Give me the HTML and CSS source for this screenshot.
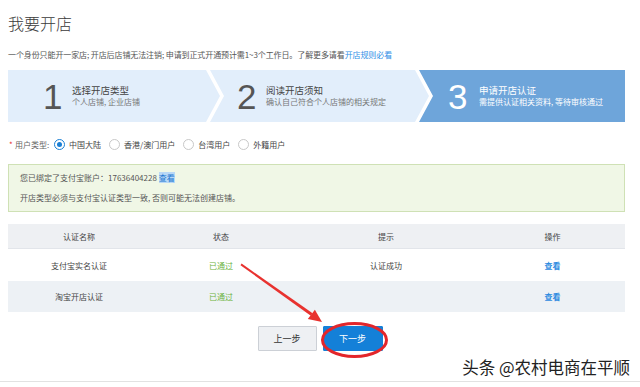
FILE: index.html
```html
<!DOCTYPE html>
<html lang="zh">
<head>
<meta charset="utf-8">
<title>我要开店</title>
<link rel="stylesheet" href="styles.css">
</head>
<body>
<div class="page">
  <h1 class="title">我要开店</h1>
  <p class="intro">一个身份只能开一家店; 开店后店铺无法注销; 申请到正式开通预计需1~3个工作日。了解更多请看<a class="link">开店规则必看</a></p>

  <div class="steps">
    <div class="step step-1">
      <span class="step-num">1</span>
      <div class="step-text">
        <div class="step-title">选择开店类型</div>
        <div class="step-sub">个人店铺, 企业店铺</div>
      </div>
    </div>
    <div class="step step-2">
      <span class="step-num">2</span>
      <div class="step-text">
        <div class="step-title">阅读开店须知</div>
        <div class="step-sub">确认自己符合个人店铺的相关规定</div>
      </div>
    </div>
    <div class="step step-3 active">
      <span class="step-num">3</span>
      <div class="step-text">
        <div class="step-title">申请开店认证</div>
        <div class="step-sub">需提供认证相关资料, 等待审核通过</div>
      </div>
    </div>
  </div>

  <div class="user-type">
    <span class="req">*</span><span class="ut-label">用户类型:</span>
    <span class="radio checked"></span><span class="radio-label">中国大陆</span>
    <span class="radio"></span><span class="radio-label">香港/澳门用户</span>
    <span class="radio"></span><span class="radio-label">台湾用户</span>
    <span class="radio"></span><span class="radio-label">外籍用户</span>
  </div>

  <div class="notice">
    <p>您已绑定了支付宝账户：17636404228 <a class="hl">查看</a></p>
    <p>开店类型必须与支付宝认证类型一致, 否则可能无法创建店铺。</p>
  </div>

  <table class="auth">
    <colgroup><col class="c1"><col class="c2"><col class="c3"><col class="c4"></colgroup>
    <thead>
      <tr><th>认证名称</th><th>状态</th><th>提示</th><th>操作</th></tr>
    </thead>
    <tbody>
      <tr class="r1"><td>支付宝实名认证</td><td class="ok">已通过</td><td>认证成功</td><td><a class="view">查看</a></td></tr>
      <tr class="r2"><td>淘宝开店认证</td><td class="ok">已通过</td><td></td><td><a class="view">查看</a></td></tr>
    </tbody>
  </table>

  <div class="actions">
    <button class="btn btn-prev">上一步</button>
    <button class="btn btn-next">下一步</button>
  </div>
</div>
<div class="bottom-line"></div>

<svg class="annot" width="640" height="387" viewBox="0 0 640 387">
  <polygon points="240.5,265.2 241.6,263.6 312.6,313.2 310.8,315.8" fill="#e8322f"/>
  <polygon points="322,322 307.8,318.9 314.9,309.8" fill="#e8322f"/>
  <ellipse cx="354.5" cy="340" rx="32" ry="16.5" fill="none" stroke="#e3262b" stroke-width="3"/>
</svg>

<div class="watermark">头条 @农村电商在平顺</div>
</body>
</html>
```

FILE: styles.css
```css
html, body {
  margin: 0;
  padding: 0;
  background: #fff;
}
body {
  position: relative;
  width: 640px;
  height: 387px;
  overflow: hidden;
  font-family: "Noto Sans CJK SC", "Liberation Sans", sans-serif;
  color: #333;
}
.page {
  padding: 0 15px 0 8px;
}
.title {
  margin: 13px 0 0;
  font-size: 16px;
  line-height: 20px;
  font-weight: 300;
  color: #3a3a3a;
}
.intro {
  margin: 17px 0 0;
  font-size: 8px;
  line-height: 10px;
  color: #555;
  white-space: nowrap;
  letter-spacing: -0.1px;
}
.link {
  color: #2f8fe6;
}
.steps {
  margin-top: 10px;
  display: flex;
  height: 52px;
}
.step {
  display: flex;
  align-items: center;
  height: 52px;
  background: #e2eefb;
  box-sizing: border-box;
}
.step-1 {
  width: 212px;
  padding-left: 35px;
  clip-path: polygon(0 0, calc(100% - 14px) 0, 100% 50%, calc(100% - 14px) 100%, 0 100%);
}
.step-2 {
  width: 219px;
  margin-left: -10px;
  padding-left: 27px;
  clip-path: polygon(0 0, calc(100% - 14px) 0, 100% 50%, calc(100% - 14px) 100%, 0 100%, 14px 50%);
}
.step-3 {
  flex: 1;
  margin-left: -10px;
  padding-left: 29px;
  background: #6ea5da;
  clip-path: polygon(0 0, 100% 0, 100% 100%, 0 100%, 14px 50%);
}
.step-num {
  font-family: "Liberation Sans", sans-serif;
  font-size: 35px;
  line-height: 35px;
  color: #555;
  width: 29px;
  margin-top: 1px;
}
.step-text {
  display: flex;
  flex-direction: column;
}
.step-title {
  font-size: 9.5px;
  line-height: 11px;
  color: #444;
}
.step-sub {
  font-size: 8px;
  line-height: 11px;
  color: #777;
}
.step-3 .step-num,
.step-3 .step-title,
.step-3 .step-sub {
  color: #fff;
}
.step-3 .step-num {
  width: 31px;
}
.user-type {
  margin-top: 16px;
  display: flex;
  align-items: center;
  height: 12px;
  font-size: 8px;
  color: #555;
}
.req {
  color: #e8322f;
  margin-left: 1px;
  width: 6px;
}
.ut-label {
  width: 39px;
  color: #666;
}
.radio {
  box-sizing: border-box;
  width: 11px;
  height: 11px;
  border-radius: 50%;
  border: 1px solid #c8c8c8;
  background: #fff;
  margin-right: 4px;
  position: relative;
}
.radio.checked {
  border-color: #1a7fd4;
}
.radio.checked::after {
  content: "";
  position: absolute;
  left: 2px;
  top: 2px;
  width: 5px;
  height: 5px;
  border-radius: 50%;
  background: #1a7fd4;
}
.radio-label {
  margin-right: 8px;
  color: #444;
}
.notice {
  margin-top: 14px;
  box-sizing: border-box;
  height: 48px;
  padding: 7px 11px;
  background: #f0f7e6;
  border: 1px solid #cfe1b5;
}
.notice p {
  margin: 0;
  font-size: 8px;
  line-height: 12px;
  color: #555;
}
.notice p + p {
  margin-top: 8px;
}
.hl {
  color: #1f78d1;
  background: #b9d8f6;
}
.auth {
  margin-top: 12px;
  width: 617px;
  border-collapse: collapse;
  table-layout: fixed;
  font-size: 8px;
  color: #444;
}
.c1 { width: 142px; }
.c2 { width: 142px; }
.c3 { width: 188px; }
.c4 { width: 145px; }
.auth th {
  height: 24px;
  padding: 0;
  font-weight: 400;
  background: #eef0f3;
  border-bottom: 1px solid #e2e5ea;
  text-align: center;
  color: #444;
}
.auth td {
  padding: 0;
  text-align: center;
}
.r1 td {
  height: 32px;
  background: #fff;
}
.r2 td {
  height: 31px;
  background: #edf1f5;
}
.ok {
  color: #6db33f;
}
.view {
  color: #2d8be0;
  font-weight: 700;
}
.actions {
  margin-top: 14px;
  display: flex;
  justify-content: center;
  gap: 6px;
  padding-left: 7px;
}
.btn {
  box-sizing: border-box;
  width: 59px;
  height: 25px;
  font-family: "Noto Sans CJK SC", sans-serif;
  font-size: 9px;
  border-radius: 1px;
  padding: 0;
}
.btn-prev {
  background: #eef0f3;
  border: 1px solid #ccd0d6;
  color: #333;
}
.btn-next {
  width: 60px;
  background: #1480d8;
  border: 1px solid #1480d8;
  color: #fff;
}
.bottom-line {
  position: absolute;
  left: 0;
  right: 0;
  top: 381px;
  height: 1px;
  background: #e2e2e2;
}
.annot {
  position: absolute;
  left: 0;
  top: 0;
  pointer-events: none;
}
.watermark {
  position: absolute;
  right: 10px;
  top: 356px;
  font-size: 16.5px;
  line-height: 22px;
  color: #222;
  text-shadow: 0 0 2px #fff, 0 0 2px #fff;
  white-space: nowrap;
}
```
